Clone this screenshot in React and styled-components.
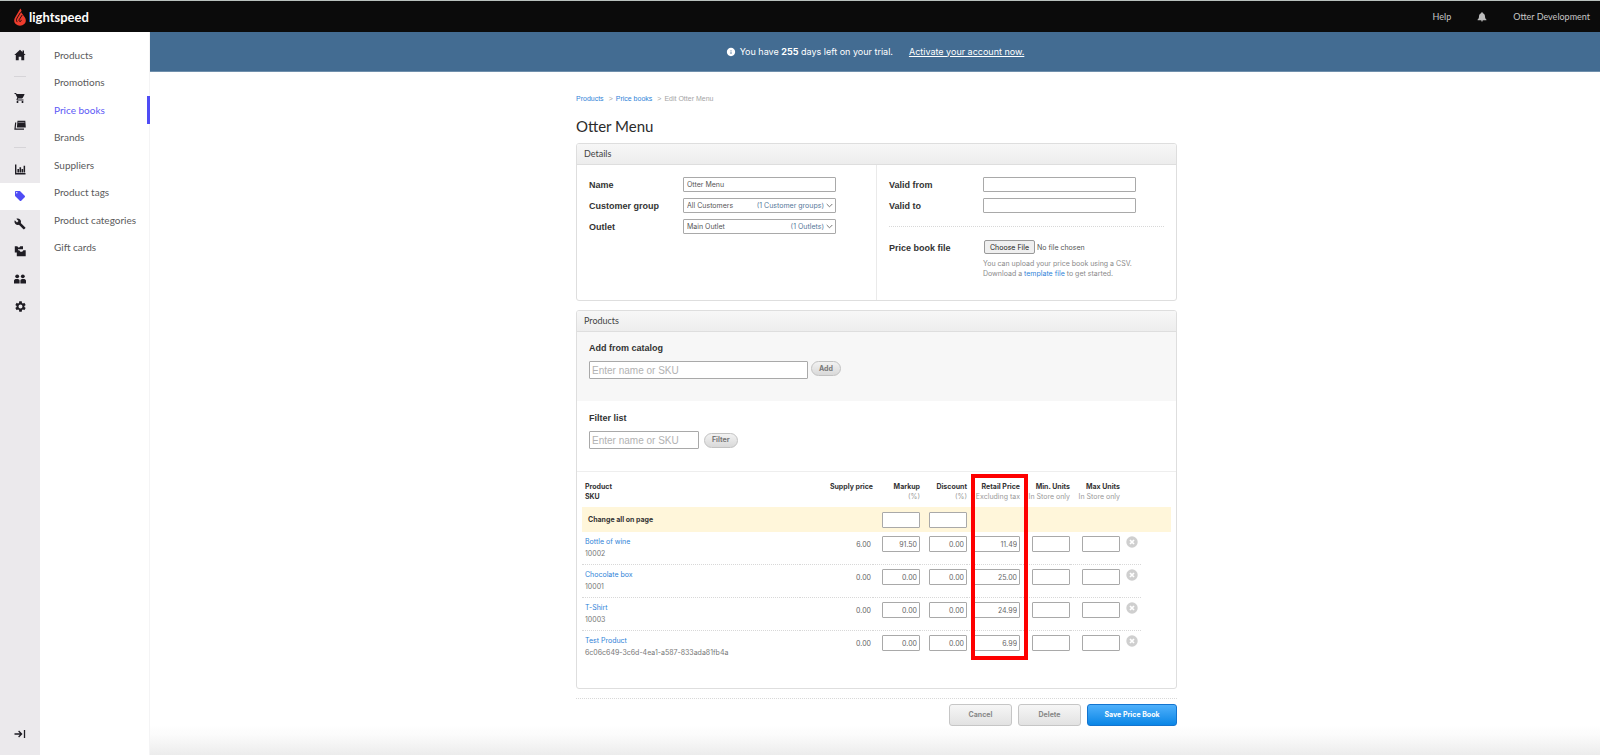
import React from "react";
import styled, { createGlobalStyle, css } from "styled-components";
import { MdShoppingCart, MdLocalOffer, MdBuild, MdSettings, MdInfo } from "react-icons/md";

const sans = `Inter, "Liberation Sans", Arial, sans-serif`;
const arial = `"Liberation Sans", Arial, sans-serif`;
const lato = `Lato, "Open Sans", sans-serif`;

const GlobalStyle = createGlobalStyle`
  *, *::before, *::after { box-sizing: border-box; }
  body { margin: 0; background: #fff; font-family: ${sans}; font-size: 7px; color: #555; }
  input, select, button { font-family: inherit; margin: 0; }
  h1, h2, h3, p, ul { margin: 0; padding: 0; }
`;

const Page = styled.div`
  display: flex;
  flex-direction: column;
  min-height: 100vh;
`;

/* ---------- top bar ---------- */

const TopBar = styled.header`
  display: flex;
  align-items: center;
  justify-content: space-between;
  height: 32px;
  padding: 0 10px 0 14px;
  background: #0b0b0b;
  border-top: 1px solid #b9c1bd;
  font-family: ${lato};
`;

const Brand = styled.a`
  display: flex;
  align-items: center;
  gap: 3px;
  color: #fff;
  font: 700 13px/16px ${lato};
  text-decoration: none;
`;

const TopLinks = styled.nav`
  display: flex;
  align-items: center;
  gap: 26px;
`;

const TopLink = styled.a`
  color: #c6c6c6;
  font-size: 9px;
  line-height: 16px;
  text-decoration: none;
`;

const IconButton = styled.button`
  display: flex;
  padding: 0;
  border: 0;
  background: none;
  color: ${(p) => p.$color || "#1f1d24"};
`;

/* ---------- side navigation ---------- */

const Columns = styled.div`
  display: flex;
  flex: 1;
`;

const Rail = styled.nav`
  display: flex;
  flex-direction: column;
  width: 40px;
  padding: 9px 0 7px;
  background: #ebe9ec;
`;

const RailGroup = styled.div`
  display: flex;
  flex-direction: column;
  height: ${(p) => p.$height}px;
`;

const RailLink = styled.a`
  display: flex;
  flex: 1;
  align-items: center;
  justify-content: center;
  color: ${(p) => (p.$active ? "#4f4cf5" : "#1f1d24")};
  background: ${(p) => (p.$active ? "#fff" : "transparent")};
`;

const RailDivider = styled.hr`
  width: 12px;
  height: 1px;
  margin: 8px auto 7px;
  border: 0;
  background: #d6d4d8;
`;

const RailFooter = styled.div`
  display: flex;
  flex-direction: column;
  height: 28px;
  margin-top: auto;
`;

const SubNav = styled.nav`
  width: 110px;
  padding-top: 9px;
  border-right: 1px solid #f4f4f5;
`;

const SubNavList = styled.ul`
  display: flex;
  flex-direction: column;
  height: 220px;
  margin-right: -1px;
  list-style: none;
`;

const SubNavItem = styled.li`
  display: flex;
  flex: 1;
  align-items: center;
  padding-left: 14px;
  border-right: 3px solid ${(p) => (p.$active ? "#4f4cf5" : "transparent")};
`;

const SubNavLink = styled.a`
  color: ${(p) => (p.$active ? "#5c59f6" : "#5a5a5c")};
  font: 10px/14px ${lato};
  text-decoration: none;
`;

/* ---------- main ---------- */

const Main = styled.main`
  flex: 1;
  background: linear-gradient(to top, #ececec, #fbfbfb 20px, #fff 30px) bottom / 100% 30px no-repeat;
`;

const Banner = styled.div`
  display: flex;
  align-items: center;
  justify-content: center;
  height: 40px;
  background: #436c92;
  border-bottom: 1px solid #6f8fac;
  color: #fff;
  font-size: 9px;
  line-height: 14px;

  svg { margin-right: 4px; }
  a { margin-left: 16px; color: #fff; }
`;

const ContentArea = styled.div`
  padding: 22px 0 0 3px;
`;

const Content = styled.div`
  width: 601px;
  margin: 0 auto;
`;

const Breadcrumbs = styled.nav`
  display: flex;
  gap: 5px;
  color: #a5a5a5;
  font: 7px/10px ${arial};

  span { display: flex; gap: 3px; }
`;

const Link = styled.a`
  color: #2f83d8;
  text-decoration: none;
`;

const Title = styled.h1`
  margin: 12px 0 7px;
  color: #2b2b2b;
  font: 400 15px/20px ${lato};
`;

const Panel = styled.section`
  margin-bottom: 9px;
  border: 1px solid #dedede;
  border-radius: 3px;
  background: #fff;
`;

const PanelTitle = styled.h2`
  height: 21px;
  padding-left: 7px;
  border-bottom: 1px solid #dedede;
  border-radius: 2px 2px 0 0;
  background: linear-gradient(#f7f7f7, #ededed);
  color: #444;
  font: 400 9px/19px ${lato};
`;

const Details = styled.div`
  display: grid;
  grid-template-columns: 299px 1fr;
  height: 135px;
`;

const DetailsColumn = styled.div`
  padding: 12px 12px 0;

  & + & { border-left: 1px solid #eaeaea; }
`;

const Field = styled.div`
  display: grid;
  grid-template-columns: 94px 153px;
  align-items: ${(p) => (p.$top ? "start" : "center")};
  margin-bottom: 6px;
`;

const Label = styled.label`
  padding-top: 1px;
  color: #333;
  font: 700 9px/14px ${arial};
`;

const box = css`
  border: 1px solid #a9a9a9;
  border-radius: 1px;
  background: #fff;
  color: #555;
`;

const TextInput = styled.input`
  ${box}
  width: 100%;
  height: 15px;
  padding: 0 3px;
  font-size: 7px;
`;

const SelectBox = styled.div`
  position: relative;
`;

const Select = styled.select`
  ${box}
  display: block;
  appearance: none;
  width: 100%;
  height: 15px;
  padding: 0 3px;
  font-size: 7px;
`;

const SelectNote = styled.span`
  position: absolute;
  top: 0;
  right: 3px;
  display: flex;
  align-items: center;
  gap: 2px;
  height: 15px;
  color: #557799;
  pointer-events: none;
`;

const Rule = styled.hr`
  margin: ${(p) => p.$margin};
  border: 0;
  border-top: 1px dotted #d8d8d8;
`;

const FileInput = styled.input`
  display: block;
  height: 15px;
  padding-left: 1px;
  color: #555;
  font-size: 7px;
  line-height: 14px;

  &::file-selector-button {
    width: 51px;
    height: 14px;
    margin-right: 2px;
    padding: 0;
    border: 1px solid #999;
    border-radius: 2px;
    background: #efefef;
    color: #222;
    font-family: ${sans};
    font-size: 7px;
  }
`;

const Help = styled.p`
  margin-top: 4px;
  color: #8a8a8a;
  font-size: 7px;
  line-height: 10px;
  white-space: nowrap;
`;

const Section = styled.form`
  height: ${(p) => p.$height}px;
  padding: ${(p) => (p.$shaded ? 8 : 9)}px 12px 0;
  background: ${(p) => (p.$shaded ? "#f7f7f7" : "#fff")};
  border-bottom: ${(p) => (p.$shaded ? "0" : "1px solid #eeeeee")};

  label { display: block; }
`;

const SearchRow = styled.div`
  display: flex;
  gap: ${(p) => p.$gap}px;
  align-items: ${(p) => p.$align || "center"};
  margin-top: 6px;
`;

const SearchInput = styled.input`
  ${box}
  width: ${(p) => p.$width}px;
  height: 18px;
  padding: 0 2px;
  font: 10px/14px ${arial};

  &::placeholder { color: #b2b2b2; opacity: 1; }
`;

const Pill = styled.button`
  height: 15px;
  padding: 0 7px;
  border: 1px solid #c2c2c2;
  border-radius: 8px;
  background: linear-gradient(#f2f2f2, #d9d9d9);
  color: #777;
  font: 700 7px/12px ${sans};
`;

const TableArea = styled.div`
  position: relative;
  padding: 10px 5px 24px;
`;

const Table = styled.table`
  width: 100%;
  table-layout: fixed;
  border-collapse: separate;
  border-spacing: 0;
`;

const HeadCell = styled.th`
  height: 25px;
  padding: 0 0 0 ${(p) => (p.$left ? 3 : 0)}px;
  color: #333;
  font-weight: 700;
  font-size: 7px;
  line-height: 10px;
  text-align: ${(p) => (p.$left ? "left" : "right")};
  vertical-align: top;
  white-space: nowrap;
`;

/* Notes wider than their column run over its left edge. */
const HeadNote = styled.small`
  display: flex;
  justify-content: flex-end;
  color: #999;
  font-weight: 400;
  font-size: 7px;
`;

const BulkCell = styled.td`
  height: 25px;
  padding: 0 0 0 ${(p) => (p.$left ? 6 : 0)}px;
  background: #fff6da;
  color: #333;
  font-weight: 700;
  text-align: ${(p) => (p.$left ? "left" : "right")};
`;

const Cell = styled.td`
  height: 33px;
  padding: ${(p) => p.$padding || "4px 0 0"};
  border-bottom: 1px dotted ${(p) => (p.$plain ? "transparent" : "#d8d8d8")};
  color: #666;
  line-height: 12px;
  text-align: ${(p) => (p.$left ? "left" : "right")};
  vertical-align: top;

  tr:last-child > & { border-bottom-color: transparent; }
`;

const Sku = styled.div`
  color: #777;
`;

const NumberInput = styled.input`
  ${box}
  display: inline-block;
  width: ${(p) => (p.$wide ? 46 : 38)}px;
  height: 16px;
  padding: 0 2px;
  color: #666;
  font-size: 7px;
  text-align: right;
  vertical-align: top;
`;

const Highlight = styled.div`
  position: absolute;
  top: 2px;
  right: 148px;
  bottom: 28px;
  width: 57px;
  border: 4px solid #fe0000;
  pointer-events: none;
`;

const Actions = styled.div`
  display: flex;
  justify-content: flex-end;
  gap: 6px;
  padding-bottom: 29px;
`;

const Action = styled.button`
  width: ${(p) => (p.$primary ? 90 : 63)}px;
  height: 22px;
  padding: 0;
  border: 1px solid ${(p) => (p.$primary ? "#1374cf" : "#c6c6c6")};
  border-radius: 3px;
  background: ${(p) => (p.$primary ? "linear-gradient(#4fb0fb, #0a86e6)" : "linear-gradient(#f6f6f6, #e2e2e2)")};
  color: ${(p) => (p.$primary ? "#fff" : "#888")};
  font: 700 7px/12px ${sans};
`;

/* ---------- drawings ---------- */

const Glyph = ({ children, size = 12, box: vb = 12 }) => (
  <svg width={size} height={size} viewBox={`0 0 ${vb} ${vb}`} fill="currentColor" aria-hidden="true">
    {children}
  </svg>
);

const Flame = () => (
  <svg width="12" height="18" viewBox="0 0 12 18" aria-hidden="true">
    <path d="M6.400.4 7.600 2.600 6.900 3.900 10.900 9.400c1.400 2.200 1.200 4.900-.6 6.600a6.200 6.200 0 0 1-8.600 0C-.1 14.300-.3 11.600 1.100 9.400z" fill="#ee3c2d" />
    <path d="M6.600 4.300 3 10.200c-.9 1.600-.6 3 .4 3.900M8.200 7 5.300 11.500c-.6 1-.1 2 .8 2s1.300-.9.900-1.700" fill="none" stroke="#0b0b0b" strokeWidth=".9" />
  </svg>
);

const HomeIcon = () => (
  <Glyph>
    <path d="M6 .8 11.700 6H10.200v5.200H7.300V7.800H4.700v3.400H1.800V6H.3z" />
    <path d="M8.500 1.500h1.500v3H8.500z" />
  </Glyph>
);

const RegisterIcon = () => (
  <Glyph>
    <path d="M3.500 1.800h7.800l.5 6.700H2.900z" />
    <path d="M1.700 3.500 1 10.100h9" fill="none" stroke="currentColor" strokeWidth="1.200" />
    <path d="M4.200 3.400h6.300" stroke="#9a979f" strokeWidth=".8" />
  </Glyph>
);

const ChartIcon = () => (
  <Glyph>
    <path d="M1 1.500h1.400v8.500H11.500v1.400H1z" />
    <path d="M3.400 6h1.600v3.500H3.400zM5.500 4.300h1.600v5.200H5.500zM7.600 6h1.500v3.500H7.600zM9.600 2.800h1.500v6.700H9.600z" />
  </Glyph>
);

const BoxesIcon = () => (
  <Glyph>
    <path d="M.8 1.300h2.500l1 1.300h1l1-1.300H9v3H4v3.200H.8z" />
    <path d="M2.800 5.300h2.400l1.200 1.400h1.800l1.200-1.400h2.300V11.200H2.800z" />
  </Glyph>
);

const PeopleIcon = () => (
  <Glyph>
    <circle cx="3.200" cy="3.300" r="1.900" />
    <circle cx="8.800" cy="3.300" r="1.900" />
    <path d="M0 10.500V7.800C0 6.600 1.200 6 2.400 6h1.400c1 0 1.800.7 1.800 1.800v2.700zM6.400 10.500V7.800c0-1.100.8-1.800 1.800-1.800h1.400C10.800 6 12 6.600 12 7.800v2.700z" />
  </Glyph>
);

const ExpandIcon = () => (
  <Glyph>
    <path d="M.5 6h7M4.600 3l3 3-3 3M10.500 2v8" fill="none" stroke="currentColor" strokeWidth="1.300" />
  </Glyph>
);

const BellIcon = () => (
  <Glyph size={10} box={10}>
    <path d="M5 .3c.6 0 .9.400.9.900 1.500.5 2 1.600 2.100 3.200.1 1.400.4 2.200 1.400 3V8.300H.6v-.9c1-.8 1.300-1.600 1.400-3 .1-1.600.6-2.700 2.100-3.200 0-.5.300-.9.9-.9zM3.900 8.600h2.200c-.1.600-.5.900-1.100.9s-1-.3-1.100-.9z" />
  </Glyph>
);

const Chevron = () => (
  <svg width="7" height="5" viewBox="0 0 7 5" fill="none" stroke="#777" aria-hidden="true">
    <path d="M.7 1 3.500 3.800 6.300 1" />
  </svg>
);

const RemoveIcon = () => (
  <Glyph>
    <circle cx="6" cy="6" r="5.700" />
    <path d="M4 4l4 4M8 4l-4 4" stroke="#fff" strokeWidth="1.700" />
  </Glyph>
);

/* ---------- data ---------- */

const railGroups = [
  { height: 27, items: [["Home", <HomeIcon />]] },
  { height: 55, items: [["Sell", <MdShoppingCart size={12} />], ["Register", <RegisterIcon />]] },
  {
    height: 165,
    items: [
      ["Reporting", <ChartIcon />],
      ["Catalog", <MdLocalOffer size={12} />, true],
      ["Services", <MdBuild size={12} />],
      ["Inventory", <BoxesIcon />],
      ["Customers", <PeopleIcon />],
      ["Setup", <MdSettings size={13} />],
    ],
  },
];

const menu = ["Products", "Promotions", "Price books", "Brands", "Suppliers", "Product tags", "Product categories", "Gift cards"];

const products = [
  { name: "Bottle of wine", sku: "10002", supply: "6.00", markup: "91.50", discount: "0.00", retail: "11.49" },
  { name: "Chocolate box", sku: "10001", supply: "0.00", markup: "0.00", discount: "0.00", retail: "25.00" },
  { name: "T-Shirt", sku: "10003", supply: "0.00", markup: "0.00", discount: "0.00", retail: "24.99" },
  { name: "Test Product", sku: "6c06c649-3c6d-4ea1-a587-833ada81fb4a", supply: "0.00", markup: "0.00", discount: "0.00", retail: "6.99" },
];

const columnWidths = [undefined, 73, 47, 47, 53, 50, 50, 21, 30];

const numericHeads = [
  ["Supply price"],
  ["Markup", "(%)"],
  ["Discount", "(%)"],
  ["Retail Price", "Excluding tax"],
  ["Min. Units", "In Store only"],
  ["Max Units", "In Store only"],
];

const SelectField = ({ id, label, value, note }) => (
  <Field>
    <Label htmlFor={id}>{label}</Label>
    <SelectBox>
      <Select id={id}>
        <option>{value}</option>
      </Select>
      <SelectNote>
        {note}
        <Chevron />
      </SelectNote>
    </SelectBox>
  </Field>
);

const ProductRow = ({ product: p }) => (
  <tr>
    <Cell $left $padding="4px 0 0 3px">
      <Link href="#">{p.name}</Link>
      <Sku>{p.sku}</Sku>
    </Cell>
    <Cell $padding="7px 2px 0 0">{p.supply}</Cell>
    <Cell><NumberInput aria-label={`${p.name} markup`} defaultValue={p.markup} /></Cell>
    <Cell><NumberInput aria-label={`${p.name} discount`} defaultValue={p.discount} /></Cell>
    <Cell><NumberInput $wide aria-label={`${p.name} retail price`} defaultValue={p.retail} /></Cell>
    <Cell><NumberInput aria-label={`${p.name} minimum units`} /></Cell>
    <Cell><NumberInput aria-label={`${p.name} maximum units`} /></Cell>
    <Cell $padding="4px 0 0 6px">
      <IconButton type="button" $color="#cfcfcf" aria-label={`Remove ${p.name}`}>
        <RemoveIcon />
      </IconButton>
    </Cell>
    <Cell $plain />
  </tr>
);

export default function App() {
  return (
    <Page>
      <GlobalStyle />
      <TopBar>
        <Brand href="#">
          <Flame />
          lightspeed
        </Brand>
        <TopLinks>
          <TopLink href="#">Help</TopLink>
          <IconButton type="button" $color="#bdbdbd" aria-label="Notifications">
            <BellIcon />
          </IconButton>
          <TopLink href="#">Otter Development</TopLink>
        </TopLinks>
      </TopBar>

      <Columns>
        <Rail aria-label="Main">
          {railGroups.map((group, i) => (
            <React.Fragment key={i}>
              {i > 0 && <RailDivider />}
              <RailGroup $height={group.height}>
                {group.items.map(([name, icon, active]) => (
                  <RailLink key={name} href="#" aria-label={name} $active={active}>
                    {icon}
                  </RailLink>
                ))}
              </RailGroup>
            </React.Fragment>
          ))}
          <RailFooter>
            <RailLink href="#" aria-label="Expand menu">
              <ExpandIcon />
            </RailLink>
          </RailFooter>
        </Rail>

        <SubNav aria-label="Catalog">
          <SubNavList>
            {menu.map((name) => (
              <SubNavItem key={name} $active={name === "Price books"}>
                <SubNavLink href="#" $active={name === "Price books"}>{name}</SubNavLink>
              </SubNavItem>
            ))}
          </SubNavList>
        </SubNav>

        <Main>
          <Banner>
            <MdInfo size={10} />
            <span>You have <b>255</b> days left on your trial.</span>
            <a href="#">Activate your account now.</a>
          </Banner>

          <ContentArea>
            <Content>
              <Breadcrumbs aria-label="Breadcrumb">
                <Link href="#">Products</Link>
                <span>&gt; <Link href="#">Price books</Link></span>
                <span>&gt; <span>Edit Otter Menu</span></span>
              </Breadcrumbs>
              <Title>Otter Menu</Title>

              <Panel>
                <PanelTitle>Details</PanelTitle>
                <Details>
                  <DetailsColumn>
                    <Field>
                      <Label htmlFor="name">Name</Label>
                      <TextInput id="name" defaultValue="Otter Menu" />
                    </Field>
                    <SelectField id="group" label="Customer group" value="All Customers" note="(1 Customer groups)" />
                    <SelectField id="outlet" label="Outlet" value="Main Outlet" note="(1 Outlets)" />
                  </DetailsColumn>
                  <DetailsColumn>
                    <Field>
                      <Label htmlFor="from">Valid from</Label>
                      <TextInput id="from" />
                    </Field>
                    <Field>
                      <Label htmlFor="to">Valid to</Label>
                      <TextInput id="to" />
                    </Field>
                    <Rule $margin="13px 0" />
                    <Field $top>
                      <Label htmlFor="file">Price book file</Label>
                      <div>
                        <FileInput id="file" type="file" />
                        <Help>
                          You can upload your price book using a CSV.
                          <br />
                          Download a <Link href="#">template file</Link> to get started.
                        </Help>
                      </div>
                    </Field>
                  </DetailsColumn>
                </Details>
              </Panel>

              <Panel>
                <PanelTitle>Products</PanelTitle>
                <Section $shaded $height={69}>
                  <Label htmlFor="add">Add from catalog</Label>
                  <SearchRow $gap={3} $align="flex-start">
                    <SearchInput id="add" $width={219} placeholder="Enter name or SKU" />
                    <Pill type="button">Add</Pill>
                  </SearchRow>
                </Section>
                <Section $height={71}>
                  <Label htmlFor="filter">Filter list</Label>
                  <SearchRow $gap={5}>
                    <SearchInput id="filter" $width={110} placeholder="Enter name or SKU" />
                    <Pill type="button">Filter</Pill>
                  </SearchRow>
                </Section>

                <TableArea>
                  <Table>
                    <colgroup>
                      {columnWidths.map((w, i) => <col key={i} width={w} />)}
                    </colgroup>
                    <thead>
                      <tr>
                        <HeadCell $left>Product<br />SKU</HeadCell>
                        {numericHeads.map(([title, note]) => (
                          <HeadCell key={title}>
                            {title}
                            {note && <HeadNote>{note}</HeadNote>}
                          </HeadCell>
                        ))}
                        <HeadCell as="td" colSpan={2} />
                      </tr>
                    </thead>
                    <tbody>
                      <tr>
                        <BulkCell $left colSpan={2}>Change all on page</BulkCell>
                        <BulkCell><NumberInput aria-label="Markup for all" /></BulkCell>
                        <BulkCell><NumberInput aria-label="Discount for all" /></BulkCell>
                        <BulkCell colSpan={5} />
                      </tr>
                      {products.map((p) => <ProductRow key={p.sku} product={p} />)}
                    </tbody>
                  </Table>
                  <Highlight />
                </TableArea>
              </Panel>

              <Rule $margin="0 0 5px" />
              <Actions>
                <Action type="button">Cancel</Action>
                <Action type="button">Delete</Action>
                <Action type="submit" $primary>Save Price Book</Action>
              </Actions>
            </Content>
          </ContentArea>
        </Main>
      </Columns>
    </Page>
  );
}
